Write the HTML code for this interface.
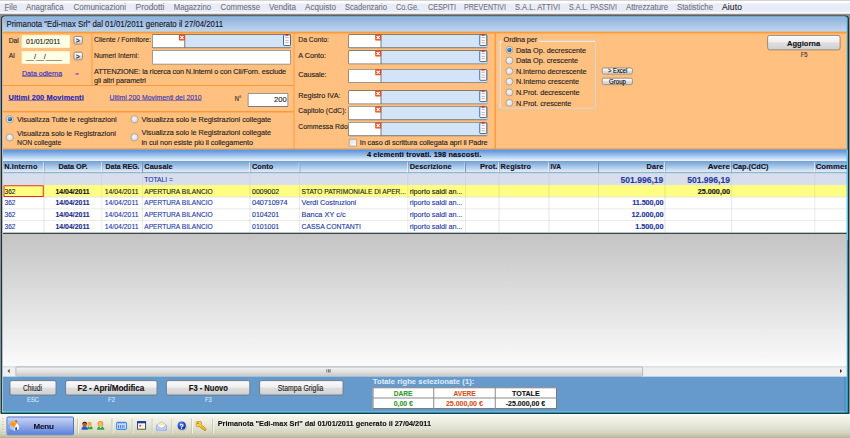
<!DOCTYPE html><html><head><meta charset="utf-8"><title>Primanota</title><style>
html,body{margin:0;padding:0;overflow:hidden;background:#fff;}
body{font-family:"Liberation Sans",sans-serif;width:850px;height:438px;}
#wrap{position:relative;width:850px;height:438px;overflow:hidden;}
#root{position:absolute;left:0;top:0;width:3400px;height:1752px;overflow:hidden;transform:scale(0.25);transform-origin:0 0;}
#root div{position:absolute;box-sizing:border-box;}
#root svg{position:absolute;overflow:visible;}
span.t{position:absolute;white-space:nowrap;font-family:"Liberation Sans",sans-serif;-webkit-text-stroke:0.48px currentColor;}
.btn{border:3.6px solid #787878;border-radius:8px;background:linear-gradient(#fbfbfb,#efefef 45%,#dedede 52%,#d0d0d0);}
.inp{border:4px solid #6a6a6a;border-right-color:#aaa;border-bottom-color:#aaa;background:#fff;}
.radio{border-radius:50%;border:3.2px solid #9a9a9a;background:radial-gradient(circle at 45% 40%,#f4f4f4 0,#e6e6e6 45%,#cacaca 100%);}

</style></head><body><div id="wrap"><div id="root">
<div class="" style="left:0px;top:0px;width:3400px;height:56px;background:linear-gradient(#b4b4b4 0,#ffffff 4.8px,#fbfbfd 10px,#e9ecf6 18px,#e9ecf6 46px,#fafbfd 50px,#ffffff 54px);"></div>
<div class="" style="left:18.4px;top:40.8px;width:13.6px;height:2.8px;background:#8a8a90;"></div>
<div class="" style="left:0px;top:54.8px;width:3400px;height:1600px;background:#8e8e8e;"></div>
<div class="" style="left:4px;top:61.6px;width:3392px;height:1594px;background:linear-gradient(#30343a,#22282c 80px,#1c3036 60%,#0e444c);border-radius:14px 14px 0 0;"></div>
<div class="" style="left:8.8px;top:65.6px;width:3382.4px;height:1584.8px;background:linear-gradient(90deg,#e6eef8 0,#e6eef8 4.8px,#6cd6f4 8px,#6cd6f4 3368px,#40b8e0 3374.4px);border-radius:10px 10px 0 0;"></div>
<div class="" style="left:12.4px;top:65.6px;width:3374.4px;height:61.6px;background:linear-gradient(#a4c0e3 0,#8fb2dc 6px,#a6c3e5 50%,#bfd6ef);border-radius:8px 8px 0 0;"></div>
<div class="" style="left:12.4px;top:126.8px;width:3374.4px;height:472px;background:#ffc080;border-top:7.2px solid #ff9c38;"></div>
<div class="" style="left:366px;top:132px;width:4px;height:208px;background:#ff9a3c;"></div>
<div class="" style="left:12px;top:340px;width:1164px;height:4px;background:#ff9a3c;"></div>
<div class="" style="left:12.4px;top:438.8px;width:1162px;height:4px;background:#ffcc98;"></div>
<div class="" style="left:12.4px;top:442.8px;width:1162px;height:7.2px;background:#ff9a3c;"></div>
<div class="" style="left:1174px;top:132px;width:4px;height:468px;background:#ff9a3c;"></div>
<div class="" style="left:1978px;top:132px;width:6px;height:465.6px;background:#ff9a3c;"></div>
<div class="" style="left:12.4px;top:593.2px;width:3374.4px;height:4.4px;background:#ff9f48;"></div>
<div class="" style="left:87.2px;top:139.6px;width:192.8px;height:52px;background:#ffffe4;border:2.4px solid #f6e6b4;"></div>
<div class="" style="left:87.2px;top:203.6px;width:192.8px;height:52.8px;background:#ffffe4;border:2.4px solid #f6e6b4;"></div>
<div class="btn" style="left:293.6px;top:143.6px;width:37.2px;height:34.8px;border-width:3.2px;"></div>
<div class="btn" style="left:293.6px;top:206.8px;width:37.2px;height:34.4px;border-width:3.2px;"></div>
<div class="" style="left:608px;top:136.2px;width:555.6px;height:56.8px;background:linear-gradient(#8a7c6c,#80746a 50%,#7a7470);border-radius:4px;"></div>
<div class="" style="left:611.2px;top:139.6px;width:125.6px;height:49.8px;background:#fff;"></div>
<div class="" style="left:740.8px;top:139.6px;width:422px;height:49.8px;background:#d4e4f8;"></div>
<svg style="left:716px;top:137.8px;width:23.6px;height:24px" viewBox="0 0 6 6"><rect width="6" height="6" rx="0.6" fill="#e8461e"/><path d="M1.4 1.5L4.6 4.6M4.6 1.5L1.4 4.6" stroke="#fff" stroke-width="1.25"/></svg>
<svg style="left:1131.6px;top:137px;width:32px;height:47.2px" viewBox="0 0 8 11.8"><rect x="0.5" y="0.6" width="7" height="10.7" rx="0.7" fill="#fcfdff" stroke="#34588e" stroke-width="0.9"/><rect x="2.4" y="0" width="2.9" height="1.5" rx="0.4" fill="#d8262a"/><path d="M2.2 3.2H5.8M2.2 6.1H5.8M2.2 8.4H5.8" stroke="#9a9a9a" stroke-width="0.7"/></svg>
<div class="" style="left:608px;top:200px;width:555.6px;height:58.4px;background:linear-gradient(#8a7c6c,#80746a 50%,#8a8480);border-radius:4px;"></div>
<div class="" style="left:611.2px;top:203.4px;width:549.6px;height:51.6px;background:#fff;"></div>
<div class="" style="left:990.8px;top:372px;width:162px;height:55.6px;background:linear-gradient(#7a7470,#6e7078 50%,#7a7c84);border-radius:4px;"></div>
<div class="" style="left:994px;top:375.4px;width:155.6px;height:48.8px;background:#fff;"></div>
<div class="radio" style="left:23.2px;top:460.8px;width:32px;height:32px;"></div>
<div class="" style="left:30.8px;top:468.4px;width:16.8px;height:16.8px;border-radius:50%;background:radial-gradient(circle at 40% 35%,#58b8ec,#1458a8 55%,#0a2f68);"></div>
<div class="radio" style="left:23.2px;top:533.6px;width:32px;height:32px;"></div>
<div class="radio" style="left:522.4px;top:460.8px;width:32px;height:32px;"></div>
<div class="radio" style="left:522.4px;top:533.2px;width:32px;height:32px;"></div>
<div class="" style="left:1392.8px;top:136.2px;width:556.4px;height:56.8px;background:linear-gradient(#8a7c6c,#80746a 50%,#7a7470);border-radius:4px;"></div>
<div class="" style="left:1396px;top:139.6px;width:125.6px;height:49.8px;background:#fff;"></div>
<div class="" style="left:1525.6px;top:139.6px;width:422.8px;height:49.8px;background:#d4e4f8;"></div>
<svg style="left:1500.8px;top:137.8px;width:23.6px;height:24px" viewBox="0 0 6 6"><rect width="6" height="6" rx="0.6" fill="#e8461e"/><path d="M1.4 1.5L4.6 4.6M4.6 1.5L1.4 4.6" stroke="#fff" stroke-width="1.25"/></svg>
<svg style="left:1917.2px;top:137px;width:32px;height:47.2px" viewBox="0 0 8 11.8"><rect x="0.5" y="0.6" width="7" height="10.7" rx="0.7" fill="#fcfdff" stroke="#34588e" stroke-width="0.9"/><rect x="2.4" y="0" width="2.9" height="1.5" rx="0.4" fill="#d8262a"/><path d="M2.2 3.2H5.8M2.2 6.1H5.8M2.2 8.4H5.8" stroke="#9a9a9a" stroke-width="0.7"/></svg>
<div class="" style="left:1392.8px;top:200.4px;width:556.4px;height:56.8px;background:linear-gradient(#8a7c6c,#80746a 50%,#7a7470);border-radius:4px;"></div>
<div class="" style="left:1396px;top:203.8px;width:125.6px;height:49.8px;background:#fff;"></div>
<div class="" style="left:1525.6px;top:203.8px;width:422.8px;height:49.8px;background:#d4e4f8;"></div>
<svg style="left:1500.8px;top:202px;width:23.6px;height:24px" viewBox="0 0 6 6"><rect width="6" height="6" rx="0.6" fill="#e8461e"/><path d="M1.4 1.5L4.6 4.6M4.6 1.5L1.4 4.6" stroke="#fff" stroke-width="1.25"/></svg>
<svg style="left:1917.2px;top:201.2px;width:32px;height:47.2px" viewBox="0 0 8 11.8"><rect x="0.5" y="0.6" width="7" height="10.7" rx="0.7" fill="#fcfdff" stroke="#34588e" stroke-width="0.9"/><rect x="2.4" y="0" width="2.9" height="1.5" rx="0.4" fill="#d8262a"/><path d="M2.2 3.2H5.8M2.2 6.1H5.8M2.2 8.4H5.8" stroke="#9a9a9a" stroke-width="0.7"/></svg>
<div class="" style="left:1392.8px;top:275.6px;width:556.4px;height:56.8px;background:linear-gradient(#8a7c6c,#80746a 50%,#7a7470);border-radius:4px;"></div>
<div class="" style="left:1396px;top:279px;width:125.6px;height:49.8px;background:#fff;"></div>
<div class="" style="left:1525.6px;top:279px;width:422.8px;height:49.8px;background:#d4e4f8;"></div>
<svg style="left:1500.8px;top:277.2px;width:23.6px;height:24px" viewBox="0 0 6 6"><rect width="6" height="6" rx="0.6" fill="#e8461e"/><path d="M1.4 1.5L4.6 4.6M4.6 1.5L1.4 4.6" stroke="#fff" stroke-width="1.25"/></svg>
<svg style="left:1917.2px;top:276.4px;width:32px;height:47.2px" viewBox="0 0 8 11.8"><rect x="0.5" y="0.6" width="7" height="10.7" rx="0.7" fill="#fcfdff" stroke="#34588e" stroke-width="0.9"/><rect x="2.4" y="0" width="2.9" height="1.5" rx="0.4" fill="#d8262a"/><path d="M2.2 3.2H5.8M2.2 6.1H5.8M2.2 8.4H5.8" stroke="#9a9a9a" stroke-width="0.7"/></svg>
<div class="" style="left:1392.8px;top:360.4px;width:556.4px;height:56.8px;background:linear-gradient(#8a7c6c,#80746a 50%,#7a7470);border-radius:4px;"></div>
<div class="" style="left:1396px;top:363.8px;width:125.6px;height:49.8px;background:#fff;"></div>
<div class="" style="left:1525.6px;top:363.8px;width:422.8px;height:49.8px;background:#d4e4f8;"></div>
<svg style="left:1500.8px;top:362px;width:23.6px;height:24px" viewBox="0 0 6 6"><rect width="6" height="6" rx="0.6" fill="#e8461e"/><path d="M1.4 1.5L4.6 4.6M4.6 1.5L1.4 4.6" stroke="#fff" stroke-width="1.25"/></svg>
<svg style="left:1917.2px;top:361.2px;width:32px;height:47.2px" viewBox="0 0 8 11.8"><rect x="0.5" y="0.6" width="7" height="10.7" rx="0.7" fill="#fcfdff" stroke="#34588e" stroke-width="0.9"/><rect x="2.4" y="0" width="2.9" height="1.5" rx="0.4" fill="#d8262a"/><path d="M2.2 3.2H5.8M2.2 6.1H5.8M2.2 8.4H5.8" stroke="#9a9a9a" stroke-width="0.7"/></svg>
<div class="" style="left:1392.8px;top:424px;width:556.4px;height:56.8px;background:linear-gradient(#8a7c6c,#80746a 50%,#7a7470);border-radius:4px;"></div>
<div class="" style="left:1396px;top:427.4px;width:125.6px;height:49.8px;background:#fff;"></div>
<div class="" style="left:1525.6px;top:427.4px;width:422.8px;height:49.8px;background:#d4e4f8;"></div>
<svg style="left:1500.8px;top:425.6px;width:23.6px;height:24px" viewBox="0 0 6 6"><rect width="6" height="6" rx="0.6" fill="#e8461e"/><path d="M1.4 1.5L4.6 4.6M4.6 1.5L1.4 4.6" stroke="#fff" stroke-width="1.25"/></svg>
<svg style="left:1917.2px;top:424.8px;width:32px;height:47.2px" viewBox="0 0 8 11.8"><rect x="0.5" y="0.6" width="7" height="10.7" rx="0.7" fill="#fcfdff" stroke="#34588e" stroke-width="0.9"/><rect x="2.4" y="0" width="2.9" height="1.5" rx="0.4" fill="#d8262a"/><path d="M2.2 3.2H5.8M2.2 6.1H5.8M2.2 8.4H5.8" stroke="#9a9a9a" stroke-width="0.7"/></svg>
<div class="" style="left:1392.8px;top:488px;width:556.4px;height:56.8px;background:linear-gradient(#8a7c6c,#80746a 50%,#7a7470);border-radius:4px;"></div>
<div class="" style="left:1396px;top:491.4px;width:125.6px;height:49.8px;background:#fff;"></div>
<div class="" style="left:1525.6px;top:491.4px;width:422.8px;height:49.8px;background:#d4e4f8;"></div>
<svg style="left:1500.8px;top:489.6px;width:23.6px;height:24px" viewBox="0 0 6 6"><rect width="6" height="6" rx="0.6" fill="#e8461e"/><path d="M1.4 1.5L4.6 4.6M4.6 1.5L1.4 4.6" stroke="#fff" stroke-width="1.25"/></svg>
<svg style="left:1917.2px;top:488.8px;width:32px;height:47.2px" viewBox="0 0 8 11.8"><rect x="0.5" y="0.6" width="7" height="10.7" rx="0.7" fill="#fcfdff" stroke="#34588e" stroke-width="0.9"/><rect x="2.4" y="0" width="2.9" height="1.5" rx="0.4" fill="#d8262a"/><path d="M2.2 3.2H5.8M2.2 6.1H5.8M2.2 8.4H5.8" stroke="#9a9a9a" stroke-width="0.7"/></svg>
<div class="" style="left:1394.8px;top:555.2px;width:32px;height:31.2px;background:linear-gradient(135deg,#dcdcdc,#fff);border:3.2px solid #a4a4a4;"></div>
<div class="" style="left:1993.6px;top:158.8px;width:390.4px;height:276px;border:4px solid #d5d5d5;border-radius:8px;box-shadow:inset 4px 4px 0 #fff3e6;"></div>
<div class="" style="left:2008px;top:140px;width:146px;height:36px;background:#ffc080;"></div>
<div class="radio" style="left:2021.6px;top:184px;width:31.2px;height:31.2px;"></div>
<div class="" style="left:2028.8px;top:191.2px;width:16.8px;height:16.8px;border-radius:50%;background:radial-gradient(circle at 40% 35%,#58b8ec,#1458a8 55%,#0a2f68);"></div>
<div class="radio" style="left:2021.6px;top:226.4px;width:31.2px;height:31.2px;"></div>
<div class="radio" style="left:2021.6px;top:268.8px;width:31.2px;height:31.2px;"></div>
<div class="radio" style="left:2021.6px;top:311.2px;width:31.2px;height:31.2px;"></div>
<div class="radio" style="left:2021.6px;top:353.6px;width:31.2px;height:31.2px;"></div>
<div class="radio" style="left:2021.6px;top:396px;width:31.2px;height:31.2px;"></div>
<div class="btn" style="left:2406.8px;top:269.6px;width:124px;height:28.8px;border-radius:8px;border-color:#858585;"></div>
<div class="btn" style="left:2406.8px;top:311.2px;width:124px;height:28.8px;border-radius:8px;border-color:#858585;"></div>
<div class="btn" style="left:3068.8px;top:140.4px;width:292.8px;height:60.8px;border-radius:10px;"></div>
<div class="" style="left:12.4px;top:598px;width:3374.4px;height:46px;background:linear-gradient(#5590da,#6ea2e0 20%,#a4c6ec 55%,#dbe9f8 88%,#eef4fc);"></div>
<div class="" style="left:12.4px;top:644px;width:3374.4px;height:48.8px;background:linear-gradient(#6f9fd4,#9dbfe4 40%,#d2e2f4 85%,#e6eef8);border-bottom:4px solid #9aa6b8;"></div>
<div class="" style="left:12.4px;top:692.8px;width:3374.4px;height:47.2px;background:#d9deec;"></div>
<div class="" style="left:12.4px;top:740px;width:3374.4px;height:47.6px;background:#ffff83;"></div>
<div class="" style="left:12.4px;top:787.6px;width:3374.4px;height:143.2px;background:#fff;"></div>
<div class="" style="left:12.4px;top:786.4px;width:3374.4px;height:3.2px;background:#e4e4e4;"></div>
<div class="" style="left:12.4px;top:834px;width:3374.4px;height:3.2px;background:#e4e4e4;"></div>
<div class="" style="left:12.4px;top:881.2px;width:3374.4px;height:3.2px;background:#e4e4e4;"></div>
<div class="" style="left:172.4px;top:648px;width:5.6px;height:42.4px;background:linear-gradient(90deg,rgba(255,255,255,.55) 45%,rgba(110,135,170,.8) 55%);"></div>
<div class="" style="left:174.4px;top:692.8px;width:3.2px;height:47.2px;background:rgba(120,120,140,0.10);"></div>
<div class="" style="left:174.4px;top:740px;width:3.2px;height:190.4px;background:rgba(120,120,140,0.20);"></div>
<div class="" style="left:403.6px;top:648px;width:5.6px;height:42.4px;background:linear-gradient(90deg,rgba(255,255,255,.55) 45%,rgba(110,135,170,.8) 55%);"></div>
<div class="" style="left:405.6px;top:692.8px;width:3.2px;height:47.2px;background:rgba(120,120,140,0.10);"></div>
<div class="" style="left:405.6px;top:740px;width:3.2px;height:190.4px;background:rgba(120,120,140,0.20);"></div>
<div class="" style="left:566.8px;top:648px;width:5.6px;height:42.4px;background:linear-gradient(90deg,rgba(255,255,255,.55) 45%,rgba(110,135,170,.8) 55%);"></div>
<div class="" style="left:568.8px;top:692.8px;width:3.2px;height:47.2px;background:rgba(120,120,140,0.10);"></div>
<div class="" style="left:568.8px;top:740px;width:3.2px;height:190.4px;background:rgba(120,120,140,0.20);"></div>
<div class="" style="left:996.4px;top:648px;width:5.6px;height:42.4px;background:linear-gradient(90deg,rgba(255,255,255,.55) 45%,rgba(110,135,170,.8) 55%);"></div>
<div class="" style="left:998.4px;top:692.8px;width:3.2px;height:47.2px;background:rgba(120,120,140,0.10);"></div>
<div class="" style="left:998.4px;top:740px;width:3.2px;height:190.4px;background:rgba(120,120,140,0.20);"></div>
<div class="" style="left:1195.2px;top:648px;width:5.6px;height:42.4px;background:linear-gradient(90deg,rgba(255,255,255,.55) 45%,rgba(110,135,170,.8) 55%);"></div>
<div class="" style="left:1197.2px;top:692.8px;width:3.2px;height:47.2px;background:rgba(120,120,140,0.10);"></div>
<div class="" style="left:1197.2px;top:740px;width:3.2px;height:190.4px;background:rgba(120,120,140,0.20);"></div>
<div class="" style="left:1628px;top:648px;width:5.6px;height:42.4px;background:linear-gradient(90deg,rgba(255,255,255,.55) 45%,rgba(110,135,170,.8) 55%);"></div>
<div class="" style="left:1630px;top:692.8px;width:3.2px;height:47.2px;background:rgba(120,120,140,0.10);"></div>
<div class="" style="left:1630px;top:740px;width:3.2px;height:190.4px;background:rgba(120,120,140,0.20);"></div>
<div class="" style="left:1858px;top:648px;width:5.6px;height:42.4px;background:linear-gradient(90deg,rgba(255,255,255,.55) 45%,rgba(110,135,170,.8) 55%);"></div>
<div class="" style="left:1860px;top:692.8px;width:3.2px;height:47.2px;background:rgba(120,120,140,0.10);"></div>
<div class="" style="left:1860px;top:740px;width:3.2px;height:190.4px;background:rgba(120,120,140,0.20);"></div>
<div class="" style="left:1992.4px;top:648px;width:5.6px;height:42.4px;background:linear-gradient(90deg,rgba(255,255,255,.55) 45%,rgba(110,135,170,.8) 55%);"></div>
<div class="" style="left:1994.4px;top:692.8px;width:3.2px;height:47.2px;background:rgba(120,120,140,0.10);"></div>
<div class="" style="left:1994.4px;top:740px;width:3.2px;height:190.4px;background:rgba(120,120,140,0.20);"></div>
<div class="" style="left:2192.4px;top:648px;width:5.6px;height:42.4px;background:linear-gradient(90deg,rgba(255,255,255,.55) 45%,rgba(110,135,170,.8) 55%);"></div>
<div class="" style="left:2194.4px;top:692.8px;width:3.2px;height:47.2px;background:rgba(120,120,140,0.10);"></div>
<div class="" style="left:2194.4px;top:740px;width:3.2px;height:190.4px;background:rgba(120,120,140,0.20);"></div>
<div class="" style="left:2390.8px;top:648px;width:5.6px;height:42.4px;background:linear-gradient(90deg,rgba(255,255,255,.55) 45%,rgba(110,135,170,.8) 55%);"></div>
<div class="" style="left:2392.8px;top:692.8px;width:3.2px;height:47.2px;background:rgba(120,120,140,0.10);"></div>
<div class="" style="left:2392.8px;top:740px;width:3.2px;height:190.4px;background:rgba(120,120,140,0.20);"></div>
<div class="" style="left:2656.4px;top:648px;width:5.6px;height:42.4px;background:linear-gradient(90deg,rgba(255,255,255,.55) 45%,rgba(110,135,170,.8) 55%);"></div>
<div class="" style="left:2658.4px;top:692.8px;width:3.2px;height:47.2px;background:rgba(120,120,140,0.10);"></div>
<div class="" style="left:2658.4px;top:740px;width:3.2px;height:190.4px;background:rgba(120,120,140,0.20);"></div>
<div class="" style="left:2921.6px;top:648px;width:5.6px;height:42.4px;background:linear-gradient(90deg,rgba(255,255,255,.55) 45%,rgba(110,135,170,.8) 55%);"></div>
<div class="" style="left:2923.6px;top:692.8px;width:3.2px;height:47.2px;background:rgba(120,120,140,0.10);"></div>
<div class="" style="left:2923.6px;top:740px;width:3.2px;height:190.4px;background:rgba(120,120,140,0.20);"></div>
<div class="" style="left:3255.6px;top:648px;width:5.6px;height:42.4px;background:linear-gradient(90deg,rgba(255,255,255,.55) 45%,rgba(110,135,170,.8) 55%);"></div>
<div class="" style="left:3257.6px;top:692.8px;width:3.2px;height:47.2px;background:rgba(120,120,140,0.10);"></div>
<div class="" style="left:3257.6px;top:740px;width:3.2px;height:190.4px;background:rgba(120,120,140,0.20);"></div>
<div class="" style="left:12.4px;top:930.8px;width:3374.4px;height:5.6px;background:#444;"></div>
<div class="" style="left:13.6px;top:740.8px;width:161.6px;height:46.8px;border:4px solid #e03020;"></div>
<div class="" style="left:12.4px;top:936px;width:3374.4px;height:530.4px;background:linear-gradient(#c4c4c4,#fbfbfb);"></div>
<div class="" style="left:12.4px;top:1466px;width:3374.4px;height:40.8px;background:#efefef;border-top:4px solid #dcdcdc;"></div>
<div class="" style="left:61.6px;top:1465.6px;width:2510.4px;height:40.8px;background:linear-gradient(#f4f4f4,#e2e2e3 50%,#c8c8ca);border:3.6px solid #a8a8a8;border-radius:6px;"></div>
<svg style="left:27.6px;top:1475.2px;width:12.4px;height:18.4px" viewBox="0 0 4 6"><path d="M3.4 0.4L0.6 3L3.4 5.6Z" fill="#444"/></svg>
<svg style="left:3357.6px;top:1475.2px;width:12.4px;height:18.4px" viewBox="0 0 4 6"><path d="M0.6 0.4L3.4 3L0.6 5.6Z" fill="#333"/></svg>
<div class="" style="left:1305.6px;top:1476.8px;width:3.2px;height:13.6px;background:#555;"></div>
<div class="" style="left:1312px;top:1476.8px;width:3.2px;height:13.6px;background:#555;"></div>
<div class="" style="left:1318.4px;top:1476.8px;width:3.2px;height:13.6px;background:#555;"></div>
<div class="" style="left:12.4px;top:1506.8px;width:3372.8px;height:138.8px;background:linear-gradient(90deg,#6699cc 3361.6px,#5c8ec4 3364px);"></div>
<div class="btn" style="left:37.6px;top:1520.8px;width:188px;height:60.8px;border-radius:10px;"></div>
<div class="btn" style="left:260.8px;top:1520.8px;width:368.8px;height:60.8px;border-radius:10px;"></div>
<div class="btn" style="left:664px;top:1520.8px;width:336.8px;height:60.8px;border-radius:10px;"></div>
<div class="btn" style="left:1037.2px;top:1520.8px;width:336.8px;height:60.8px;border-radius:10px;"></div>
<div class="" style="left:1489.6px;top:1549.2px;width:738.4px;height:87.2px;background:#fff;border:4px solid #7a7a7a;"></div>
<div class="" style="left:1489.6px;top:1590.4px;width:738.4px;height:4px;background:#8a8a8a;"></div>
<div class="" style="left:1732.8px;top:1549.2px;width:4px;height:87.2px;background:#8a8a8a;"></div>
<div class="" style="left:1979.2px;top:1549.2px;width:4px;height:87.2px;background:#8a8a8a;"></div>
<div class="" style="left:0px;top:1655.6px;width:3400px;height:96.4px;background:linear-gradient(#fcfcf8 0,#f8f8f2 6px,#f2f2e8 16px,#ebebde 36px,#e1e1d1 56px,#d3d3bf 76px,#c3c3aa 88px,#b3b398 96px);"></div>
<div class="" style="left:10.4px;top:1674px;width:4px;height:4px;background:#b4b3a0;box-shadow:2.4px 2.4px 0 #fff;"></div>
<div class="" style="left:10.4px;top:1684.8px;width:4px;height:4px;background:#b4b3a0;box-shadow:2.4px 2.4px 0 #fff;"></div>
<div class="" style="left:10.4px;top:1695.6px;width:4px;height:4px;background:#b4b3a0;box-shadow:2.4px 2.4px 0 #fff;"></div>
<div class="" style="left:10.4px;top:1706.4px;width:4px;height:4px;background:#b4b3a0;box-shadow:2.4px 2.4px 0 #fff;"></div>
<div class="" style="left:10.4px;top:1717.2px;width:4px;height:4px;background:#b4b3a0;box-shadow:2.4px 2.4px 0 #fff;"></div>
<div class="" style="left:10.4px;top:1728px;width:4px;height:4px;background:#b4b3a0;box-shadow:2.4px 2.4px 0 #fff;"></div>
<div class="" style="left:26px;top:1665.6px;width:270px;height:75.2px;background:linear-gradient(#c9d4f2,#a9bcec 30%,#7f9be2 70%,#5f83da);border:4px solid #4a74d8;border-radius:6px;"></div>
<div class="" style="left:308.8px;top:1674px;width:3.2px;height:60px;background:#c4c3b0;box-shadow:3.2px 0 0 #fbfbf4;"></div>
<div class="" style="left:446.4px;top:1674px;width:3.2px;height:60px;background:#c4c3b0;box-shadow:3.2px 0 0 #fbfbf4;"></div>
<div class="" style="left:526.8px;top:1674px;width:3.2px;height:60px;background:#c4c3b0;box-shadow:3.2px 0 0 #fbfbf4;"></div>
<div class="" style="left:606.8px;top:1674px;width:3.2px;height:60px;background:#c4c3b0;box-shadow:3.2px 0 0 #fbfbf4;"></div>
<div class="" style="left:686px;top:1674px;width:3.2px;height:60px;background:#c4c3b0;box-shadow:3.2px 0 0 #fbfbf4;"></div>
<div class="" style="left:765.2px;top:1674px;width:3.2px;height:60px;background:#c4c3b0;box-shadow:3.2px 0 0 #fbfbf4;"></div>
<div class="" style="left:848px;top:1674px;width:3.2px;height:60px;background:#c4c3b0;box-shadow:3.2px 0 0 #fbfbf4;"></div>
<svg style="left:0px;top:1656px;width:880px;height:96px" viewBox="0 414 220 24">
<defs>
<radialGradient id="gh" cx="40%" cy="30%" r="70%"><stop offset="0" stop-color="#6f96f4"/><stop offset="0.6" stop-color="#2248cc"/><stop offset="1" stop-color="#102a90"/></radialGradient>
<linearGradient id="gk" x1="0" y1="0" x2="1" y2="1"><stop offset="0" stop-color="#fbe06a"/><stop offset="1" stop-color="#e8a820"/></linearGradient>
</defs>
<!-- home -->
<ellipse cx="14.3" cy="430.6" rx="5" ry="1.2" fill="#5070c0" opacity=".35"/>
<rect x="15.3" y="420.5" width="1.6" height="2.6" fill="#c8341c"/>
<path d="M10 425.1L14.4 427V431.1L10.3 429.1Z" fill="#a4d0f6"/>
<path d="M14.4 427L16.6 423L18.9 425.8V429.3L14.4 431.1Z" fill="#fbfcff"/>
<path d="M15.3 427.6L16.9 427V429.9L15.3 430.6Z" fill="#27378c"/>
<path d="M12.3 420.7L16.9 422.6L14.5 427.2L9.6 425Z" fill="#ff9a1e"/>
<path d="M12.3 420.7L16.9 422.6L16.5 423.3L12.2 421.5Z" fill="#ffb850"/>
<!-- people -->
<ellipse cx="89.6" cy="423.9" rx="2.3" ry="2.2" fill="#f2a84a"/>
<path d="M87.2 429.3Q87.2 426 89.9 426Q92.7 426 92.7 429.3Z" fill="#2fa544"/>
<path d="M88.8 426.1L89.8 427.4L90.8 426.1Z" fill="#fff"/>
<ellipse cx="84.7" cy="424.4" rx="2.3" ry="2.6" fill="#c4602a"/>
<path d="M82.3 424.2Q82.2 421.7 84.7 421.7Q87.2 421.7 87.1 424.2Q86 422.8 84.7 423Q83.3 422.9 82.3 424.2Z" fill="#2b2430"/>
<path d="M81.5 429.8Q81.5 426.6 84.6 426.6Q87.8 426.6 87.8 429.8Z" fill="#2456d4"/>
<!-- person -->
<ellipse cx="100.4" cy="423.9" rx="2.9" ry="2.9" fill="#e8922e"/>
<ellipse cx="100.4" cy="424.3" rx="2" ry="2.2" fill="#f8b860"/>
<path d="M97.1 429.8Q97.1 426.3 100.6 426.3Q104.3 426.3 104.3 429.8Z" fill="#2fa544"/>
<path d="M99.2 426.5L100.6 428.3L102 426.5Z" fill="#fff"/>
<!-- calendar -->
<rect x="116.6" y="422.4" width="9.9" height="7" rx="1.1" fill="#d6e8fc" stroke="#3a8cf0" stroke-width="1.1"/>
<path d="M118 423.7H125.2" stroke="#a070c8" stroke-width="0.9" stroke-dasharray="0.9 0.7"/>
<path d="M118.6 425V428.3M120.4 425V428.3M122.2 425V428.3M124 425V428.3" stroke="#3a7ce0" stroke-width="1"/>
<!-- window -->
<rect x="137.5" y="421.7" width="8.1" height="7.6" fill="#fffbe0" stroke="#1e3a9a" stroke-width="0.9"/>
<rect x="137.1" y="421.3" width="8.9" height="2" fill="#1c3a98"/>
<rect x="137.1" y="428.8" width="8.9" height="0.9" fill="#9c8c28"/>
<circle cx="140.2" cy="425.7" r="1.05" fill="#d23ca0"/>
<path d="M141.5 425.7H144.4" stroke="#e8d8a0" stroke-width="0.7"/>
<!-- envelope -->
<path d="M156.6 425.2L161.5 421.5L166.4 425.2V430.2H156.6Z" fill="#e4e8fc" stroke="#a8b4f0" stroke-width="0.9"/>
<path d="M158.3 424.2L161.5 421.9L164.7 424.2V426H158.3Z" fill="#f8ef9c"/>
<path d="M157.8 425.3H165.2V428H157.8Z" fill="#ffffff"/>
<path d="M156.6 425.4L161.5 428.4L166.4 425.4V430.2H156.6Z" fill="#ccd6fa" stroke="#9aa8ec" stroke-width="0.7"/>
<path d="M156.8 430L160.4 427.7M166.2 430L162.6 427.7" stroke="#9aa8ec" stroke-width="0.6"/>
<path d="M158.5 429.2H164.5" stroke="#a8d0f8" stroke-width="0.9"/>
<!-- help -->
<ellipse cx="182.2" cy="426.4" rx="4.9" ry="4.6" fill="#8a8a98" opacity=".45"/>
<circle cx="181.7" cy="425.7" r="4.8" fill="#e8ecf8"/>
<circle cx="181.7" cy="425.7" r="4.1" fill="url(#gh)"/>
<!-- key -->
<path d="M196.2 422.6Q196.2 421.5 197.3 421.5H200.3Q201.4 421.5 201.4 422.6V424.6L205.9 428.7V430.4H204L203.4 429.2H202.2L201.9 428H200.8L199.6 426.6H197.3Q196.2 426.6 196.2 425.5Z" fill="url(#gk)" stroke="#bb8a14" stroke-width="0.7"/>
<circle cx="198" cy="423.3" r="0.75" fill="#c8381c"/>
</svg>
<span class="t" style="left:18px;top:3.6px;font-size:34px;font-weight:400;color:#74747e;line-height:48px;transform:scaleX(0.9125);transform-origin:0 50%;">File</span>
<span class="t" style="left:104px;top:3.6px;font-size:34px;font-weight:400;color:#74747e;line-height:48px;transform:scaleX(0.9228);transform-origin:0 50%;">Anagrafica</span>
<span class="t" style="left:294px;top:3.6px;font-size:34px;font-weight:400;color:#74747e;line-height:48px;transform:scaleX(0.9417);transform-origin:0 50%;">Comunicazioni</span>
<span class="t" style="left:542.4px;top:3.6px;font-size:34px;font-weight:400;color:#74747e;line-height:48px;letter-spacing:-0.248px;">Prodotti</span>
<span class="t" style="left:694.8px;top:3.6px;font-size:34px;font-weight:400;color:#74747e;line-height:48px;transform:scaleX(0.9074);transform-origin:0 50%;">Magazzino</span>
<span class="t" style="left:882px;top:3.6px;font-size:34px;font-weight:400;color:#74747e;line-height:48px;transform:scaleX(0.9189);transform-origin:0 50%;">Commesse</span>
<span class="t" style="left:1076px;top:3.6px;font-size:34px;font-weight:400;color:#74747e;line-height:48px;transform:scaleX(0.9519);transform-origin:0 50%;">Vendita</span>
<span class="t" style="left:1220px;top:3.6px;font-size:34px;font-weight:400;color:#74747e;line-height:48px;transform:scaleX(0.9509);transform-origin:0 50%;">Acquisto</span>
<span class="t" style="left:1380px;top:3.6px;font-size:34px;font-weight:400;color:#74747e;line-height:48px;transform:scaleX(0.8888);transform-origin:0 50%;">Scadenzario</span>
<span class="t" style="left:1584px;top:3.6px;font-size:34px;font-weight:400;color:#74747e;line-height:48px;transform:scaleX(0.8541);transform-origin:0 50%;">Co.Ge.</span>
<span class="t" style="left:1712px;top:3.6px;font-size:34px;font-weight:400;color:#74747e;line-height:48px;transform:scaleX(0.8469);transform-origin:0 50%;">CESPITI</span>
<span class="t" style="left:1856px;top:3.6px;font-size:34px;font-weight:400;color:#74747e;line-height:48px;transform:scaleX(0.8310);transform-origin:0 50%;">PREVENTIVI</span>
<span class="t" style="left:2060px;top:3.6px;font-size:34px;font-weight:400;color:#74747e;line-height:48px;transform:scaleX(0.8848);transform-origin:0 50%;">S.A.L. ATTIVI</span>
<span class="t" style="left:2276px;top:3.6px;font-size:34px;font-weight:400;color:#74747e;line-height:48px;transform:scaleX(0.8283);transform-origin:0 50%;">S.A.L. PASSIVI</span>
<span class="t" style="left:2504px;top:3.6px;font-size:34px;font-weight:400;color:#74747e;line-height:48px;transform:scaleX(0.9165);transform-origin:0 50%;">Attrezzature</span>
<span class="t" style="left:2708px;top:3.6px;font-size:34px;font-weight:400;color:#74747e;line-height:48px;transform:scaleX(0.9180);transform-origin:0 50%;">Statistiche</span>
<span class="t" style="left:2888px;top:3.6px;font-size:34px;font-weight:400;color:#222;line-height:48px;letter-spacing:0.5px;">Aiuto</span>
<span class="t" style="left:25.6px;top:72.8px;font-size:34.4px;font-weight:400;color:#15151c;line-height:48px;transform:scaleX(0.9098);transform-origin:0 50%;">Primanota &quot;Edi-max Srl&quot; dal 01/01/2011 generato il 27/04/2011</span>
<span class="t" style="left:35.2px;top:135.6px;font-size:29.2px;font-weight:400;color:#222;line-height:48px;transform:scaleX(0.9133);transform-origin:0 50%;">Dal</span>
<span class="t" style="left:35.2px;top:198.8px;font-size:29.2px;font-weight:400;color:#222;line-height:48px;transform:scaleX(0.9093);transform-origin:0 50%;">Al</span>
<span class="t" style="left:104px;top:141.6px;font-size:32px;font-weight:400;color:#222;line-height:48px;transform:scaleX(0.8746);transform-origin:0 50%;">01/01/2011</span>
<span class="t" style="left:104px;top:202px;font-size:32px;font-weight:400;color:#222;line-height:48px;transform:scaleX(0.8916);transform-origin:0 50%;">__/__/____</span>
<span class="t" style="left:304px;top:138.4px;font-size:25.6px;font-weight:700;color:#333;line-height:48px;letter-spacing:0.248px;">&gt;</span>
<span class="t" style="left:304px;top:201.2px;font-size:25.6px;font-weight:700;color:#333;line-height:48px;letter-spacing:0.248px;">&gt;</span>
<span class="t" style="left:88px;top:269.6px;font-size:29.2px;font-weight:400;color:#2828c8;line-height:48px;text-decoration:underline;transform:scaleX(0.9597);transform-origin:0 50%;">Data odierna</span>
<span class="t" style="left:301.2px;top:273.2px;font-size:20.8px;font-weight:700;color:#6040d0;line-height:48px;transform:scaleX(1.1188);transform-origin:0 50%;">=</span>
<span class="t" style="left:376px;top:135.2px;font-size:29.2px;font-weight:400;color:#222;line-height:48px;transform:scaleX(0.9496);transform-origin:0 50%;">Cliente / Fornitore:</span>
<span class="t" style="left:376px;top:196.8px;font-size:29.2px;font-weight:400;color:#222;line-height:48px;transform:scaleX(0.9404);transform-origin:0 50%;">Numeri Interni:</span>
<span class="t" style="left:376px;top:263.2px;font-size:29.2px;font-weight:400;color:#222;line-height:48px;letter-spacing:-0.492px;">ATTENZIONE: la ricerca con N.Interni o con Cli/Forn. esclude</span>
<span class="t" style="left:376px;top:299.2px;font-size:29.2px;font-weight:400;color:#222;line-height:48px;letter-spacing:-0.448px;">gli altri parametri</span>
<span class="t" style="left:34px;top:365.2px;font-size:29.6px;font-weight:700;color:#2222bb;line-height:48px;text-decoration:underline;letter-spacing:0.34px;">Ultimi 200 Movimenti</span>
<span class="t" style="left:438px;top:366px;font-size:29.2px;font-weight:400;color:#3333bb;line-height:48px;text-decoration:underline;transform:scaleX(0.9433);transform-origin:0 50%;">Ultimi 200 Movimenti del 2010</span>
<span class="t" style="left:938.8px;top:367.6px;font-size:29.2px;font-weight:400;color:#222;line-height:48px;transform:scaleX(0.7935);transform-origin:0 50%;">N°</span>
<span class="t" style="left:1096px;top:373.2px;font-size:32px;font-weight:400;color:#222;line-height:48px;transform:scaleX(0.9440);transform-origin:0 50%;">200</span>
<span class="t" style="left:68px;top:452.8px;font-size:29.2px;font-weight:400;color:#222;line-height:48px;letter-spacing:-0.044px;">Visualizza Tutte le registrazioni</span>
<span class="t" style="left:68px;top:508.8px;font-size:29.2px;font-weight:400;color:#222;line-height:48px;letter-spacing:-0.156px;">Visualizza solo le Registrazioni</span>
<span class="t" style="left:68px;top:544.8px;font-size:29.2px;font-weight:400;color:#222;line-height:48px;transform:scaleX(0.9314);transform-origin:0 50%;">NON collegate</span>
<span class="t" style="left:566px;top:452.8px;font-size:29.2px;font-weight:400;color:#222;line-height:48px;letter-spacing:-0.168px;">Visualizza solo le Registrazioni collegate</span>
<span class="t" style="left:566px;top:507.2px;font-size:29.2px;font-weight:400;color:#222;line-height:48px;letter-spacing:-0.168px;">Visualizza solo le Registrazioni collegate</span>
<span class="t" style="left:566px;top:545.6px;font-size:29.2px;font-weight:400;color:#222;line-height:48px;letter-spacing:-0.356px;">in cui non esiste più il collegamento</span>
<span class="t" style="left:1193.2px;top:135.2px;font-size:29.2px;font-weight:400;color:#222;line-height:48px;transform:scaleX(0.9344);transform-origin:0 50%;">Da Conto:</span>
<span class="t" style="left:1193.2px;top:196.8px;font-size:29.2px;font-weight:400;color:#222;line-height:48px;letter-spacing:-0.148px;">A Conto:</span>
<span class="t" style="left:1193.2px;top:272.4px;font-size:29.2px;font-weight:400;color:#222;line-height:48px;letter-spacing:-0.3px;">Causale:</span>
<span class="t" style="left:1193.2px;top:358.4px;font-size:29.2px;font-weight:400;color:#222;line-height:48px;letter-spacing:-0.076px;">Registro IVA:</span>
<span class="t" style="left:1193.2px;top:419.2px;font-size:29.2px;font-weight:400;color:#222;line-height:48px;transform:scaleX(0.9585);transform-origin:0 50%;">Capitolo (CdC):</span>
<span class="t" style="left:1193.2px;top:483.2px;font-size:29.2px;font-weight:400;color:#222;line-height:48px;transform:scaleX(0.9462);transform-origin:0 50%;">Commessa Rdo</span>
<span class="t" style="left:1438.8px;top:547.2px;font-size:29.2px;font-weight:400;color:#222;line-height:48px;letter-spacing:-0.328px;">In caso di scrittura collegata apri il Padre</span>
<span class="t" style="left:2014.4px;top:135.2px;font-size:29.2px;font-weight:400;color:#222;line-height:48px;letter-spacing:-0.432px;">Ordina per</span>
<span class="t" style="left:2063.6px;top:175.6px;font-size:29.2px;font-weight:400;color:#222;line-height:48px;letter-spacing:-0.176px;">Data Op. decrescente</span>
<span class="t" style="left:2063.6px;top:218px;font-size:29.2px;font-weight:400;color:#222;line-height:48px;letter-spacing:-0.172px;">Data Op. crescente</span>
<span class="t" style="left:2063.6px;top:260.4px;font-size:29.2px;font-weight:400;color:#222;line-height:48px;letter-spacing:-0.208px;">N.Interno decrescente</span>
<span class="t" style="left:2063.6px;top:302.8px;font-size:29.2px;font-weight:400;color:#222;line-height:48px;letter-spacing:-0.124px;">N.Interno crescente</span>
<span class="t" style="left:2063.6px;top:345.2px;font-size:29.2px;font-weight:400;color:#222;line-height:48px;letter-spacing:-0.208px;">N.Prot. decrescente</span>
<span class="t" style="left:2063.6px;top:387.6px;font-size:29.2px;font-weight:400;color:#222;line-height:48px;letter-spacing:-0.228px;">N.Prot. crescente</span>
<span class="t" style="left:2431.6px;top:260px;font-size:27.2px;font-weight:400;color:#000;line-height:48px;transform:scaleX(0.8585);transform-origin:0 50%;">&gt; Excel</span>
<span class="t" style="left:2436.4px;top:301.6px;font-size:27.2px;font-weight:400;color:#000;line-height:48px;transform:scaleX(0.8946);transform-origin:0 50%;">Group</span>
<span class="t" style="left:3148px;top:147.6px;font-size:32px;font-weight:700;color:#111;line-height:48px;transform:scaleX(0.9456);transform-origin:0 50%;">Aggiorna</span>
<span class="t" style="left:3203.2px;top:194px;font-size:26.4px;font-weight:400;color:#333;line-height:48px;transform:scaleX(0.8957);transform-origin:0 50%;">F5</span>
<span class="t" style="left:1467.6px;top:595.2px;font-size:29.6px;font-weight:700;color:#0a0a14;line-height:48px;letter-spacing:0.36px;">4 elementi trovati. 198 nascosti.</span>
<span class="t" style="left:16.8px;top:642.8px;font-size:29.2px;font-weight:700;color:#10101c;line-height:48px;letter-spacing:0.564px;">N.Interno</span>
<span class="t" style="left:234px;top:642.8px;font-size:29.2px;font-weight:700;color:#10101c;line-height:48px;letter-spacing:-0.236px;">Data OP.</span>
<span class="t" style="left:422px;top:642.8px;font-size:29.2px;font-weight:700;color:#10101c;line-height:48px;transform:scaleX(0.9528);transform-origin:0 50%;">Data REG.</span>
<span class="t" style="left:577.2px;top:642.8px;font-size:29.2px;font-weight:700;color:#10101c;line-height:48px;letter-spacing:0.236px;">Causale</span>
<span class="t" style="left:1008px;top:642.8px;font-size:29.2px;font-weight:700;color:#10101c;line-height:48px;letter-spacing:0.18px;">Conto</span>
<span class="t" style="left:1638.8px;top:642.8px;font-size:29.2px;font-weight:700;color:#10101c;line-height:48px;letter-spacing:0.34px;">Descrizione</span>
<span class="t" style="left:1920px;top:642.8px;font-size:29.2px;font-weight:700;color:#10101c;line-height:48px;transform:scaleX(1.0529);transform-origin:0 50%;">Prot.</span>
<span class="t" style="left:2002.4px;top:642.8px;font-size:29.2px;font-weight:700;color:#10101c;line-height:48px;letter-spacing:0.4px;">Registro</span>
<span class="t" style="left:2201.6px;top:642.8px;font-size:29.2px;font-weight:700;color:#10101c;line-height:48px;transform:scaleX(0.8946);transform-origin:0 50%;">IVA</span>
<span class="t" style="left:2586.4px;top:642.8px;font-size:29.2px;font-weight:700;color:#10101c;line-height:48px;letter-spacing:0.572px;">Dare</span>
<span class="t" style="left:2831.2px;top:642.8px;font-size:29.2px;font-weight:700;color:#10101c;line-height:48px;transform:scaleX(1.1091);transform-origin:0 50%;">Avere</span>
<span class="t" style="left:2931.2px;top:642.8px;font-size:29.2px;font-weight:700;color:#10101c;line-height:48px;letter-spacing:-0.076px;">Cap.(CdC)</span>
<span class="t" style="left:3262.8px;top:642.8px;font-size:29.2px;font-weight:700;color:#10101c;line-height:48px;transform:scaleX(1.0642);transform-origin:0 50%;">Commes</span>
<span class="t" style="left:577.2px;top:693.2px;font-size:29.2px;font-weight:400;color:#2438a8;line-height:48px;transform:scaleX(0.9210);transform-origin:0 50%;">TOTALI =</span>
<span class="t" style="left:2482.4px;top:693.2px;font-size:39.2px;font-weight:700;color:#1f3a9e;line-height:48px;transform:scaleX(0.8728);transform-origin:0 50%;">501.996,19</span>
<span class="t" style="left:2749.2px;top:693.2px;font-size:39.2px;font-weight:700;color:#1f3a9e;line-height:48px;transform:scaleX(0.8708);transform-origin:0 50%;">501.996,19</span>
<span class="t" style="left:18.4px;top:739.6px;font-size:29.2px;font-weight:400;color:#1a1a1a;line-height:48px;transform:scaleX(0.9034);transform-origin:0 50%;">362</span>
<span class="t" style="left:222px;top:739.6px;font-size:29.2px;font-weight:700;color:#111;line-height:48px;transform:scaleX(0.9468);transform-origin:0 50%;">14/04/2011</span>
<span class="t" style="left:419.2px;top:739.6px;font-size:29.2px;font-weight:400;color:#1a1a1a;line-height:48px;transform:scaleX(0.9394);transform-origin:0 50%;">14/04/2011</span>
<span class="t" style="left:577.2px;top:739.6px;font-size:29.2px;font-weight:400;color:#1a1a1a;line-height:48px;transform:scaleX(0.9098);transform-origin:0 50%;">APERTURA BILANCIO</span>
<span class="t" style="left:1008px;top:739.6px;font-size:29.2px;font-weight:400;color:#1a1a1a;line-height:48px;transform:scaleX(0.9574);transform-origin:0 50%;">0009002</span>
<span class="t" style="left:1206px;top:739.6px;font-size:29.2px;font-weight:400;color:#1a1a1a;line-height:48px;transform:scaleX(0.9047);transform-origin:0 50%;">STATO PATRIMONIALE DI APER...</span>
<span class="t" style="left:1638.8px;top:739.6px;font-size:29.2px;font-weight:400;color:#1a1a1a;line-height:48px;letter-spacing:-0.284px;">riporto saldi an...</span>
<span class="t" style="left:18.4px;top:787.2px;font-size:29.2px;font-weight:400;color:#2438a8;line-height:48px;transform:scaleX(0.9034);transform-origin:0 50%;">362</span>
<span class="t" style="left:222px;top:787.2px;font-size:29.2px;font-weight:700;color:#1c2c8c;line-height:48px;transform:scaleX(0.9468);transform-origin:0 50%;">14/04/2011</span>
<span class="t" style="left:419.2px;top:787.2px;font-size:29.2px;font-weight:400;color:#2438a8;line-height:48px;transform:scaleX(0.9394);transform-origin:0 50%;">14/04/2011</span>
<span class="t" style="left:577.2px;top:787.2px;font-size:29.2px;font-weight:400;color:#2438a8;line-height:48px;transform:scaleX(0.9098);transform-origin:0 50%;">APERTURA BILANCIO</span>
<span class="t" style="left:1008px;top:787.2px;font-size:29.2px;font-weight:400;color:#2438a8;line-height:48px;letter-spacing:-0.5px;">040710974</span>
<span class="t" style="left:1206px;top:787.2px;font-size:29.2px;font-weight:400;color:#2438a8;line-height:48px;letter-spacing:-0.108px;">Verdi Costruzioni</span>
<span class="t" style="left:1638.8px;top:787.2px;font-size:29.2px;font-weight:400;color:#2438a8;line-height:48px;letter-spacing:-0.284px;">riporto saldi an...</span>
<span class="t" style="left:18.4px;top:834.6px;font-size:29.2px;font-weight:400;color:#2438a8;line-height:48px;transform:scaleX(0.9034);transform-origin:0 50%;">362</span>
<span class="t" style="left:222px;top:834.6px;font-size:29.2px;font-weight:700;color:#1c2c8c;line-height:48px;transform:scaleX(0.9468);transform-origin:0 50%;">14/04/2011</span>
<span class="t" style="left:419.2px;top:834.6px;font-size:29.2px;font-weight:400;color:#2438a8;line-height:48px;transform:scaleX(0.9394);transform-origin:0 50%;">14/04/2011</span>
<span class="t" style="left:577.2px;top:834.6px;font-size:29.2px;font-weight:400;color:#2438a8;line-height:48px;transform:scaleX(0.9098);transform-origin:0 50%;">APERTURA BILANCIO</span>
<span class="t" style="left:1008px;top:834.6px;font-size:29.2px;font-weight:400;color:#2438a8;line-height:48px;transform:scaleX(0.9574);transform-origin:0 50%;">0104201</span>
<span class="t" style="left:1206px;top:834.6px;font-size:29.2px;font-weight:400;color:#2438a8;line-height:48px;letter-spacing:0.208px;">Banca XY c/c</span>
<span class="t" style="left:1638.8px;top:834.6px;font-size:29.2px;font-weight:400;color:#2438a8;line-height:48px;letter-spacing:-0.284px;">riporto saldi an...</span>
<span class="t" style="left:18.4px;top:882px;font-size:29.2px;font-weight:400;color:#2438a8;line-height:48px;transform:scaleX(0.9034);transform-origin:0 50%;">362</span>
<span class="t" style="left:222px;top:882px;font-size:29.2px;font-weight:700;color:#1c2c8c;line-height:48px;transform:scaleX(0.9468);transform-origin:0 50%;">14/04/2011</span>
<span class="t" style="left:419.2px;top:882px;font-size:29.2px;font-weight:400;color:#2438a8;line-height:48px;transform:scaleX(0.9394);transform-origin:0 50%;">14/04/2011</span>
<span class="t" style="left:577.2px;top:882px;font-size:29.2px;font-weight:400;color:#2438a8;line-height:48px;transform:scaleX(0.9098);transform-origin:0 50%;">APERTURA BILANCIO</span>
<span class="t" style="left:1008px;top:882px;font-size:29.2px;font-weight:400;color:#2438a8;line-height:48px;transform:scaleX(0.9574);transform-origin:0 50%;">0101001</span>
<span class="t" style="left:1206px;top:882px;font-size:29.2px;font-weight:400;color:#2438a8;line-height:48px;transform:scaleX(0.9395);transform-origin:0 50%;">CASSA CONTANTI</span>
<span class="t" style="left:1638.8px;top:882px;font-size:29.2px;font-weight:400;color:#2438a8;line-height:48px;letter-spacing:-0.284px;">riporto saldi an...</span>
<span class="t" style="left:2790.8px;top:739.6px;font-size:29.2px;font-weight:700;color:#111;line-height:48px;letter-spacing:-0.072px;">25.000,00</span>
<span class="t" style="left:2528.8px;top:787.2px;font-size:29.2px;font-weight:700;color:#1c34a0;line-height:48px;letter-spacing:-0.384px;">11.500,00</span>
<span class="t" style="left:2526px;top:834.6px;font-size:29.2px;font-weight:700;color:#1c34a0;line-height:48px;letter-spacing:-0.252px;">12.000,00</span>
<span class="t" style="left:2541.2px;top:882px;font-size:29.2px;font-weight:700;color:#1c34a0;line-height:48px;letter-spacing:-0.152px;">1.500,00</span>
<span class="t" style="left:92px;top:1527.6px;font-size:34px;font-weight:400;color:#222;line-height:48px;transform:scaleX(0.7843);transform-origin:0 50%;">Chiudi</span>
<span class="t" style="left:310.4px;top:1528px;font-size:32.8px;font-weight:700;color:#111;line-height:48px;letter-spacing:-0.44px;">F2 - Apri/Modifica</span>
<span class="t" style="left:755.2px;top:1528px;font-size:32.8px;font-weight:700;color:#111;line-height:48px;transform:scaleX(0.9253);transform-origin:0 50%;">F3 - Nuovo</span>
<span class="t" style="left:1111.2px;top:1527.6px;font-size:34px;font-weight:400;color:#222;line-height:48px;transform:scaleX(0.8111);transform-origin:0 50%;">Stampa Griglia</span>
<span class="t" style="left:107.6px;top:1574.8px;font-size:26.4px;font-weight:400;color:#dbe8f6;line-height:48px;transform:scaleX(0.8919);transform-origin:0 50%;">ESC</span>
<span class="t" style="left:432px;top:1574.8px;font-size:26.4px;font-weight:400;color:#dbe8f6;line-height:48px;transform:scaleX(0.9087);transform-origin:0 50%;">F2</span>
<span class="t" style="left:820px;top:1574.8px;font-size:26.4px;font-weight:400;color:#dbe8f6;line-height:48px;transform:scaleX(0.8828);transform-origin:0 50%;">F3</span>
<span class="t" style="left:1491.2px;top:1502.4px;font-size:30.4px;font-weight:700;color:#dcebfa;line-height:48px;letter-spacing:0.292px;">Totale righe selezionate (1):</span>
<span class="t" style="left:1575.2px;top:1547.2px;font-size:30.4px;font-weight:700;color:#2c9a2c;line-height:48px;transform:scaleX(0.8639);transform-origin:0 50%;">DARE</span>
<span class="t" style="left:1813.6px;top:1547.2px;font-size:30.4px;font-weight:700;color:#d2521a;line-height:48px;transform:scaleX(0.8667);transform-origin:0 50%;">AVERE</span>
<span class="t" style="left:2048px;top:1547.2px;font-size:30.4px;font-weight:700;color:#111;line-height:48px;transform:scaleX(0.9297);transform-origin:0 50%;">TOTALE</span>
<span class="t" style="left:1575.2px;top:1590px;font-size:29.6px;font-weight:700;color:#2c9a2c;line-height:48px;transform:scaleX(0.9334);transform-origin:0 50%;">0,00 €</span>
<span class="t" style="left:1784px;top:1590px;font-size:29.6px;font-weight:700;color:#d2521a;line-height:48px;transform:scaleX(0.9415);transform-origin:0 50%;">25.000,00 €</span>
<span class="t" style="left:2023.2px;top:1590px;font-size:29.6px;font-weight:700;color:#111;line-height:48px;transform:scaleX(0.9506);transform-origin:0 50%;">-25.000,00 €</span>
<span class="t" style="left:134px;top:1681.6px;font-size:32px;font-weight:700;color:#10102a;line-height:48px;letter-spacing:-0.688px;">Menu</span>
<span class="t" style="left:870.8px;top:1670.8px;font-size:29.2px;font-weight:700;color:#111;line-height:48px;letter-spacing:0.048px;">Primanota &quot;Edi-max Srl&quot; dal 01/01/2011 generato il 27/04/2011</span>
<span class="t" style="left:718.4px;top:1679.2px;font-size:30.4px;font-weight:700;color:#fff;line-height:48px;transform:scaleX(0.9258);transform-origin:0 50%;">?</span>
<div style="left:3386.8px;top:600px;width:4.8px;height:360px;background:#5cc8ee;"></div>
<div style="left:3391.6px;top:600px;width:4.4px;height:360px;background:#1e3238;"></div>
<div style="left:3396px;top:600px;width:4px;height:360px;background:#8e8e8e;"></div>
</div></div></body></html>
